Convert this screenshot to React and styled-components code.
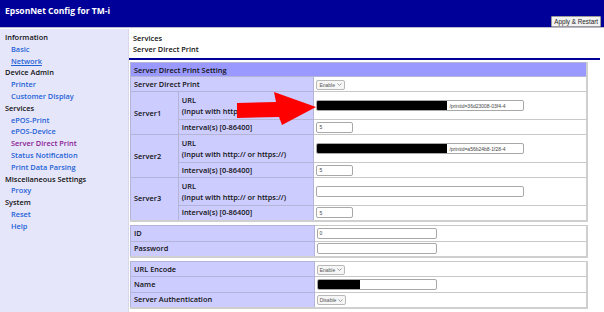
import React from "react";
import styled, { createGlobalStyle } from "styled-components";

const Global = createGlobalStyle`
  html, body { margin: 0; padding: 0; background: #fff; }
  body { font-family: "Open Sans", "Noto Sans", sans-serif; }
`;

const Page = styled.div`
  position: relative;
  width: 604px;
  height: 312px;
  overflow: hidden;
  display: flex;
  flex-direction: column;
`;

const Header = styled.header`
  height: 27px;
  background: #000099;
  border-bottom: 1px solid #b8b8c8;
  display: flex;
  justify-content: space-between;
  align-items: flex-start;
  padding: 0 3px 0 5px;
`;

const Title = styled.h1`
  margin: 5px 0 0;
  color: #fff;
  font-size: 8.5px;
  font-weight: 700;
`;

const ApplyButton = styled.button`
  margin-top: 16px;
  height: 11px;
  padding: 0 2px;
  font-family: "Liberation Sans", sans-serif;
  font-size: 6.3px;
  color: #222;
  background: #f2f2f2;
  border: 1px solid #9a9a9a;
  border-radius: 1px;
  line-height: 9px;
`;

const Body = styled.div`
  flex: 1;
  display: flex;
  margin-top: 1px;
`;

const Sidebar = styled.nav`
  width: 128px;
  background: #e6e6fa;
  border-right: 1px solid #d8d8e8;
  padding-top: 3px;
  font-size: 7.4px;
  font-weight: 600;
  line-height: 11.8px;
`;

const NavHeading = styled.div`
  color: #111;
  padding-left: 5px;
`;

const NavLink = styled.div`
  padding-left: 11px;
  color: ${(p) => (p.$active ? "#8a2096" : "#1f63d6")};
  text-decoration: ${(p) => (p.$underline ? "underline" : "none")};
`;

const Main = styled.main`
  flex: 1;
  padding-top: 4px;
`;

const Crumbs = styled.div`
  padding-left: 4px;
  font-size: 7.4px;
  font-weight: 600;
  line-height: 11px;
  color: #111;
`;

const Rule = styled.div`
  height: 2px;
  background: #000099;
  margin: 3px 4px 2px 0;
`;

const Table = styled.table`
  width: 458px;
  margin: 0 0 3px 1px;
  border-collapse: collapse;
  border: 1px solid #c4c4c4;
  border-right: 2px solid #cfcfcf;
  border-bottom: 2px solid #cfcfcf;
  font-size: 7.4px;
  font-weight: 600;
  color: #111;
`;

const Row = styled.tr`
  height: ${(p) => p.$h || 15}px;
`;

const HeadCell = styled.th`
  background: #9999ff;
  text-align: left;
  padding: 0 3px;
  font-weight: 600;
  border: 1px solid #b4b4d8;
`;

const Label = styled.td`
  background: #ccccff;
  padding: 0 3px;
  line-height: 11px;
  border: 1px solid #b4b4d8;
  width: ${(p) => (p.$w ? `${p.$w}px` : "auto")};
`;

const Value = styled.td`
  background: #fff;
  padding: 0 2px;
  border: 1px solid #c8c8c8;
  width: 269px;
`;

const Field = styled.div`
  display: flex;
  align-items: center;
  width: ${(p) => p.$w}px;
  height: 9px;
  border: 1px solid #a8a8a8;
  border-radius: 2px;
  overflow: hidden;
  font-family: "Liberation Sans", sans-serif;
  font-size: 5px;
  font-weight: 400;
  color: #444;
  background: #fff;
`;

const FieldText = styled.span`
  padding: 0 2px;
  white-space: nowrap;
`;

const Redacted = styled.span`
  flex: none;
  width: ${(p) => p.$w}px;
  height: 100%;
  background: #000;
`;

const Select = styled.div`
  display: inline-flex;
  align-items: center;
  gap: 2px;
  height: 8px;
  padding: 0 2px;
  border: 1px solid #b8b8b8;
  border-radius: 2px;
  background: #f6f6f6;
  font-family: "Liberation Sans", sans-serif;
  font-size: 5px;
  font-weight: 400;
  color: #555;
`;

const Arrow = styled.svg`
  position: absolute;
  left: 0;
  top: 0;
  pointer-events: none;
`;

const Chevron = () => (
  <svg width="5" height="3" viewBox="0 0 5 3">
    <polyline points="0.5,0.5 2.5,2.5 4.5,0.5" fill="none" stroke="#777" strokeWidth="0.7" />
  </svg>
);

const Choice = ({ children }) => (
  <Select>
    {children}
    <Chevron />
  </Select>
);

const nav = [
  ["h", "Information"],
  ["l", "Basic"],
  ["u", "Network"],
  ["h", "Device Admin"],
  ["l", "Printer"],
  ["l", "Customer Display"],
  ["h", "Services"],
  ["l", "ePOS-Print"],
  ["l", "ePOS-Device"],
  ["a", "Server Direct Print"],
  ["l", "Status Notification"],
  ["l", "Print Data Parsing"],
  ["h", "Miscellaneous Settings"],
  ["l", "Proxy"],
  ["h", "System"],
  ["l", "Reset"],
  ["l", "Help"],
];

const servers = [
  { name: "Server1", url: "/printid=36d23008-03f4-4", hidden: true },
  { name: "Server2", url: "/printid=a56b24b8-1f28-4", hidden: true },
  { name: "Server3", url: "", hidden: false },
];

export default function App() {
  return (
    <Page>
      <Global />
      <Header>
        <Title>EpsonNet Config for TM-i</Title>
        <ApplyButton>Apply &amp; Restart</ApplyButton>
      </Header>
      <Body>
        <Sidebar>
          {nav.map(([kind, text]) =>
            kind === "h" ? (
              <NavHeading key={text}>{text}</NavHeading>
            ) : (
              <NavLink key={text} $active={kind === "a"} $underline={kind === "u"}>
                {text}
              </NavLink>
            )
          )}
        </Sidebar>
        <Main>
          <Crumbs>
            Services
            <br />
            Server Direct Print
          </Crumbs>
          <Rule />
          <Table>
            <tbody>
              <Row $h={14}>
                <HeadCell colSpan={3}>Server Direct Print Setting</HeadCell>
              </Row>
              <Row>
                <Label colSpan={2}>Server Direct Print</Label>
                <Value>
                  <Choice>Enable</Choice>
                </Value>
              </Row>
              {servers.map((s) => (
                <React.Fragment key={s.name}>
                  <Row $h={28}>
                    <Label rowSpan={2} $w={41}>
                      {s.name}
                    </Label>
                    <Label $w={131}>
                      URL
                      <br />
                      (Input with http:// or https://)
                    </Label>
                    <Value>
                      <Field $w={206}>
                        {s.hidden && <Redacted $w={130} />}
                        <FieldText>{s.url}</FieldText>
                      </Field>
                    </Value>
                  </Row>
                  <Row>
                    <Label>Interval(s) [0-86400]</Label>
                    <Value>
                      <Field $w={35}>
                        <FieldText>5</FieldText>
                      </Field>
                    </Value>
                  </Row>
                </React.Fragment>
              ))}
            </tbody>
          </Table>
          <Table>
            <tbody>
              <Row $h={16}>
                <Label $w={178}>ID</Label>
                <Value>
                  <Field $w={118}>
                    <FieldText>0</FieldText>
                  </Field>
                </Value>
              </Row>
              <Row $h={16}>
                <Label>Password</Label>
                <Value>
                  <Field $w={118} />
                </Value>
              </Row>
            </tbody>
          </Table>
          <Table>
            <tbody>
              <Row $h={15}>
                <Label $w={178}>URL Encode</Label>
                <Value>
                  <Choice>Enable</Choice>
                </Value>
              </Row>
              <Row $h={16}>
                <Label>Name</Label>
                <Value>
                  <Field $w={118}>
                    <Redacted $w={42} />
                  </Field>
                </Value>
              </Row>
              <Row $h={15}>
                <Label>Server Authentication</Label>
                <Value>
                  <Choice>Disable</Choice>
                </Value>
              </Row>
            </tbody>
          </Table>
        </Main>
      </Body>
      <Arrow width="604" height="312" viewBox="0 0 604 312">
        <polygon
          points="237,103 276,102 274,92 316,107 282,125 279,117 237,118"
          fill="#ff0000"
        />
      </Arrow>
    </Page>
  );
}
